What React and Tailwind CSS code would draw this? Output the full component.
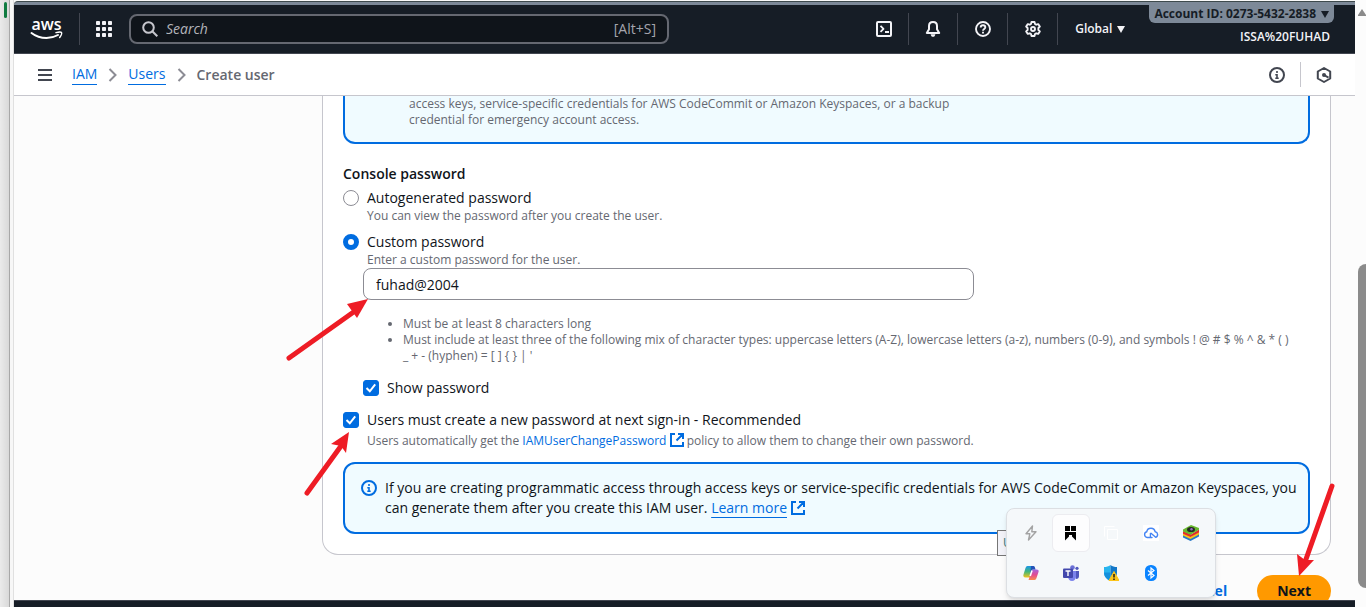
import React from "react";

function AwsLogo() {
  return (
    <svg className="block" width="34" height="34" viewBox="0 0 34 34" aria-label="AWS" role="img">
      <text x="16.500" y="18" textAnchor="middle" fontFamily="'Open Sans', sans-serif" fontWeight="600" fontSize="16" fill="#fff">aws</text>
      <path d="M1.500 21C6 24.500 11 26 16.500 26C20.500 26 24.500 25 28 23" fill="none" stroke="#fff" strokeWidth="2" strokeLinecap="round" />
      <path d="M26 20.600C28.500 19.900 31 19.900 31.500 20.500C32 21.400 31 24 29.700 25.400" fill="none" stroke="#fff" strokeWidth="1.500" strokeLinecap="round" strokeLinejoin="round" />
    </svg>
  );
}

function GridIcon() {
  const cells = [0, 6, 12];
  return (
    <svg width="16" height="16" viewBox="0 0 16 16" fill="#f3f3f7" aria-hidden="true">
      {cells.map((y) => cells.map((x) => <rect key={`${x}-${y}`} x={x} y={y} width="4" height="4" rx="0.800" />))}
    </svg>
  );
}

function SearchIcon() {
  return (
    <svg width="16" height="16" viewBox="0 0 16 16" fill="none" stroke="#c6c6cd" strokeWidth="2" aria-hidden="true">
      <circle cx="6.500" cy="6.500" r="5.300" />
      <path d="M10.300 10.300 15.300 15.300" />
    </svg>
  );
}

function ShellIcon() {
  return (
    <svg width="16" height="16" viewBox="0 0 16 16" fill="none" stroke="#f3f3f7" strokeWidth="2" strokeLinejoin="round" aria-hidden="true">
      <rect x="1" y="1" width="14" height="14" rx="1" />
      <path d="M4.500 4.800 7.500 7.800 4.500 10.800M9 11h4" strokeWidth="1.800" />
    </svg>
  );
}

function BellIcon() {
  return (
    <svg width="16" height="16" viewBox="0 0 16 16" fill="none" stroke="#f3f3f7" strokeWidth="2" strokeLinejoin="round" aria-hidden="true">
      <path d="M8 1C5.500 1 4 2.800 4 5v3.200L1.800 12h12.400L12 8.200V5c0-2.200-1.500-4-4-4Z" />
      <path d="M5.600 13.200c.3 1.700 1.200 2.600 2.400 2.600s2.100-.9 2.400-2.600Z" fill="#f3f3f7" stroke="none" />
    </svg>
  );
}

function HelpIcon() {
  return (
    <svg width="16" height="16" viewBox="0 0 16 16" fill="none" stroke="#f3f3f7" strokeWidth="1.900" aria-hidden="true">
      <circle cx="8" cy="8" r="7" />
      <path d="M5.700 6.400C5.700 5 6.700 4.300 8 4.300s2.300.8 2.300 2c0 1.700-2.300 1.700-2.300 3.500" />
      <path d="M8 10.700v1.800" />
    </svg>
  );
}

function GearIcon() {
  return (
    <svg width="16" height="16" viewBox="0 0 16 16" fill="none" stroke="#f3f3f7" strokeWidth="1.900" strokeLinejoin="round" aria-hidden="true">
      <path d="M6.500 1h3l.5 2 1.200.7 2-.6 1.600 2.500L13.400 7v2l1.400 1.400-1.600 2.500-2-.6-1.200.7-.5 2h-3l-.5-2-1.200-.7-2 .6-1.600-2.500L2.600 9V7L1.200 5.600l1.600-2.500 2 .6L6 3Z" />
      <circle cx="8" cy="8" r="2" />
    </svg>
  );
}

function MenuIcon() {
  return (
    <svg width="14" height="12" viewBox="0 0 14 12" fill="#424650" aria-hidden="true">
      <path d="M0 0h14v2H0zM0 5h14v2H0zM0 10h14v2H0z" />
    </svg>
  );
}

function ChevronIcon() {
  return (
    <svg width="9" height="14" viewBox="0 0 9 14" fill="none" stroke="#8c8c94" strokeWidth="2" aria-hidden="true">
      <path d="M1.500 1 7.500 7l-6 6" />
    </svg>
  );
}

function InfoIcon({ className }) {
  return (
    <svg className={className} width="16" height="16" viewBox="0 0 16 16" fill="none" stroke="currentColor" strokeWidth="2" aria-hidden="true">
      <circle cx="8" cy="8" r="7" />
      <path d="M8 4v2M6.300 7.700H8v4M6.300 11.300h3.400" strokeWidth="1.600" />
    </svg>
  );
}

function HexIcon() {
  return (
    <svg width="16" height="16" viewBox="0 0 16 16" fill="none" stroke="#424650" strokeWidth="2" strokeLinejoin="round" aria-hidden="true">
      <path d="M8 1 14.200 4.500v7L8 15 1.800 11.500v-7Z" />
      <circle cx="8" cy="8" r="2" fill="#424650" stroke="none" />
      <path d="M8 8 12.500 10.700" />
    </svg>
  );
}

function ExternalIcon() {
  return (
    <svg className="inline-block align-[-2px]" width="14" height="14" viewBox="0 0 14 14" fill="none" stroke="#006ce0" strokeWidth="2" aria-hidden="true">
      <path d="M5 1H1v12h12V9M8 1h5v5M13 1 6.500 7.500" />
    </svg>
  );
}

function Divider() {
  return <span className="h-8 w-px bg-[#424650]" />;
}

function Caret({ className }) {
  return (
    <svg className={className} width="8" height="7" viewBox="0 0 8 7" fill="currentColor" aria-hidden="true">
      <path d="M0 0h8L4 7Z" />
    </svg>
  );
}

function TopBar() {
  return (
    <header className="flex h-[49px] shrink-0 items-center border-b border-[#424650] bg-[#161d26] pl-4 text-[#f3f3f7]">
      <a href="#home" className="mr-[15px]"><AwsLogo /></a>
      <Divider />
      <button className="mx-4" aria-label="Services"><GridIcon /></button>
      <div className="ml-px flex h-[30px] w-[540px] items-center gap-2 rounded-lg border-2 border-[#656871] bg-[#0f141a] px-[11px]">
        <SearchIcon />
        <input aria-label="Search" placeholder="Search" className="min-w-0 flex-1 bg-transparent text-sm italic outline-none placeholder:text-[#b4b4bb]" />
        <span className="text-sm text-[#a4a4ad]">[Alt+S]</span>
      </div>
      <div className="ml-auto flex items-center">
        <button className="pr-4 pl-[17px]" aria-label="CloudShell"><ShellIcon /></button>
        <Divider />
        <button className="px-4" aria-label="Notifications"><BellIcon /></button>
        <Divider />
        <button className="pr-4 pl-[17px]" aria-label="Help"><HelpIcon /></button>
        <Divider />
        <button className="pr-4 pl-[17px]" aria-label="Settings"><GearIcon /></button>
        <Divider />
        <button className="flex items-center gap-[5px] pr-6 pl-[17px] text-xs font-semibold">Global <Caret /></button>
      </div>
      <div className="flex h-full flex-col items-end gap-1 pr-[21px]">
        <button className="flex h-[18px] items-center gap-[5px] rounded-b-md bg-[#7d8998] px-[5px] text-xs font-bold whitespace-nowrap text-[#161d26]">
          Account ID: 0273-5432-2838 <Caret />
        </button>
        <span className="pr-1 text-xs leading-5 font-semibold">ISSA%20FUHAD</span>
      </div>
    </header>
  );
}

function Breadcrumbs() {
  return (
    <div className="flex h-[42px] shrink-0 items-center border-b border-[#c6c6cd] bg-white pr-[23px] pl-6 text-sm leading-5">
      <button className="mr-5" aria-label="Open navigation"><MenuIcon /></button>
      <nav aria-label="Breadcrumbs" className="flex items-center gap-[11px]">
        <a href="#iam" className="border-b border-[#006ce0] text-[#006ce0]">IAM</a>
        <ChevronIcon />
        <a href="#users" className="border-b border-[#006ce0] text-[#006ce0]">Users</a>
        <ChevronIcon />
        <span className="font-semibold text-[#656871]">Create user</span>
      </nav>
      <div className="ml-auto flex items-center text-[#424650]">
        <button className="pr-[15px]" aria-label="Info"><InfoIcon /></button>
        <span className="h-[25px] w-px bg-[#c6c6cd]" />
        <button className="pl-[15px]" aria-label="Tools"><HexIcon /></button>
      </div>
    </div>
  );
}

function Radio({ id, label, hint, checked }) {
  return (
    <div className="flex gap-2">
      <input
        id={id}
        type="radio"
        name="console-password"
        defaultChecked={checked}
        className="mt-[2px] size-4 shrink-0 appearance-none rounded-full border border-[#8c8c94] bg-white checked:border-[5px] checked:border-[#006ce0]"
      />
      <div>
        <label htmlFor={id} className="block text-sm leading-5">{label}</label>
        <p className="text-xs leading-4 text-[#656871]">{hint}</p>
      </div>
    </div>
  );
}

function Checkbox({ id, label }) {
  return (
    <div className="flex items-center gap-2">
      <span className="grid shrink-0">
        <input id={id} type="checkbox" defaultChecked className="col-start-1 row-start-1 size-4 appearance-none rounded-[3px] border border-[#8c8c94] checked:border-[#006ce0] checked:bg-[#006ce0]" />
        <svg className="pointer-events-none col-start-1 row-start-1" width="16" height="16" viewBox="0 0 16 16" fill="none" stroke="#fff" strokeWidth="2" aria-hidden="true">
          <path d="M3.500 8 6.800 11.300 12.200 4.300" />
        </svg>
      </span>
      <label htmlFor={id} className="text-sm leading-5">{label}</label>
    </div>
  );
}

function PasswordCard() {
  return (
    <section className="rounded-b-2xl border border-t-0 border-[#c6c6cd] bg-white px-5 pb-5">
      <div className="rounded-b-xl border-2 border-t-0 border-[#006ce0] bg-[#f0fbff] pb-[14px] pl-16 text-xs leading-4 text-[#656871]">
        <p>
          access keys, service-specific credentials for AWS CodeCommit or Amazon Keyspaces, or a backup
          <br />
          credential for emergency account access.
        </p>
      </div>

      <h2 className="mt-5 text-sm leading-5 font-semibold">Console password</h2>
      <div className="mt-1 flex flex-col gap-2">
        <Radio id="auto" label="Autogenerated password" hint="You can view the password after you create the user." />
        <Radio id="custom" label="Custom password" hint="Enter a custom password for the user." checked />
      </div>

      <div className="pl-5">
        <input
          type="text"
          aria-label="Custom password"
          defaultValue="fuhad@2004"
          className="h-8 w-[611px] max-w-full rounded-lg border border-[#8c8c94] bg-white px-3 text-sm outline-none"
        />
        <ul className="mt-4 mb-[14px] list-disc pl-10 text-xs leading-4 text-[#656871]">
          <li>Must be at least 8 characters long</li>
          <li>
            Must include at least three of the following mix of character types: uppercase letters (A-Z), lowercase letters (a-z), numbers (0-9), and symbols ! @ # $ % ^ &amp; * ( )
            <br />_ + - (hyphen) = [ ] {"{ }"} | '
          </li>
        </ul>
        <Checkbox id="show" label="Show password" />
      </div>

      <div className="mt-3">
        <Checkbox id="reset" label="Users must create a new password at next sign-in - Recommended" />
        <p className="pl-6 text-xs leading-[22px] text-[#656871]">
          Users automatically get the <a href="#policy" className="text-[#006ce0]">IAMUserChangePassword <ExternalIcon /></a> policy to allow them to change their own password.
        </p>
      </div>

      <div className="mt-[10px] flex gap-2 rounded-xl border-2 border-[#006ce0] bg-[#f0fbff] py-[14px] pr-1 pl-4 text-sm leading-5">
        <InfoIcon className="mt-[2px] shrink-0 text-[#006ce0]" />
        <p>
          If you are creating programmatic access through access keys or service-specific credentials for AWS CodeCommit or Amazon Keyspaces, you
          <br />
          can generate them after you create this IAM user.{" "}
          <a href="#learn" className="text-[#006ce0]"><span className="underline underline-offset-4">Learn more</span> <ExternalIcon /></a>
        </p>
      </div>
    </section>
  );
}

function TrayIcon({ children }) {
  return (
    <svg width="16" height="16" viewBox="0 0 16 16" aria-hidden="true">{children}</svg>
  );
}

const trayItems = [
  { name: "Power", icon: <path d="M9.500 1 3 8.800h3.800L5.500 15 13 6.800H8.800Z" fill="none" stroke="#a3a3a3" strokeWidth="1.400" strokeLinejoin="round" /> },
  { name: "Bookmarks", active: true, icon: <path d="M2 1h5v5H2zM8 1h5v5H8zM2 7h11v8.500L9 11.500V10H6v1.500L2 15.500Z" fill="#000" /> },
  { name: "Windows", icon: <path d="M1.500 11.500V1.500H11.500M4.500 4.500h10v10h-10z" fill="none" stroke="#fff" strokeWidth="1" /> },
  {
    name: "Cloud",
    icon: (
      <>
        <path d="M0 0h16v16H0z" fill="#fff" />
        <path d="M9 12.500H4.200a2.900 2.900 0 0 1-.4-5.700C4 4.500 5.800 3.200 8 3.200s3.700 1.300 4.100 3.500a2.900 2.900 0 0 1 .6 5.600L8 8.200" fill="none" stroke="#4485f4" strokeWidth="1.400" strokeLinejoin="round" strokeLinecap="round" />
        <path d="M7.400 8v4.500" stroke="#4485f4" strokeWidth="1.300" />
      </>
    ),
  },
  {
    name: "BlueStacks",
    icon: (
      <>
        <path d="M0 9.500 8 12.500 16 8v3.500L7.500 16 0 12.500Z" fill="#2878c8" />
        <path d="M0 8 8 11.500l8-4.500v2.500L7.500 14 0 10.500Z" fill="#f5c518" />
        <path d="M0 6 8 9.500l8-5v3L7.500 12 0 8.800Z" fill="#e32b2b" />
        <path d="M0 4.500 8 0l8 3v1.800L7.500 9.800 0 6.500Z" fill="#68b82e" />
        <ellipse cx="8" cy="4.500" rx="4" ry="2.600" fill="#252a25" />
        <circle cx="8.500" cy="4.200" r="1.200" fill="#9a6ac5" />
      </>
    ),
  },
  {
    name: "Copilot",
    icon: (
      <>
        <defs>
          <linearGradient id="cpLeft" x1="0" y1="0" x2="0" y2="1"><stop stopColor="#1795e8" /><stop offset="0.500" stopColor="#44b779" /><stop offset="1" stopColor="#f2c31a" /></linearGradient>
          <linearGradient id="cpRight" x1="0" y1="0" x2="0" y2="1"><stop stopColor="#a563df" /><stop offset="0.500" stopColor="#e24b91" /><stop offset="1" stopColor="#fb8a4b" /></linearGradient>
        </defs>
        <path d="M4.500 1h6L7 12.500H2.500C.5 12.500 0 11 .5 9.500L2.500 3C3 1.700 3.500 1 4.500 1Z" fill="url(#cpLeft)" />
        <path d="M11.500 15h-6L9 4.500h4.500c2 0 2.500 1.200 2 2.500l-2 6c-.4 1.200-1 2-2 2Z" fill="url(#cpRight)" />
        <path d="M8 1h2.500c1 0 1.500 1 2 3.500H9L7 10.500Z" fill="#2352b8" />
        <path d="m9 5.500-1.800 5.500" stroke="#fff" strokeWidth="1.600" />
      </>
    ),
  },
  {
    name: "Teams",
    icon: (
      <>
        <circle cx="9.500" cy="2.600" r="2.300" fill="#6b70d6" />
        <circle cx="14" cy="3.300" r="1.600" fill="#5058bd" />
        <path d="M11 6h5v5c0 2-1 3-3 3Z" fill="#5058bd" />
        <path d="M5 6h8v5.500c0 2.600-1.700 4.500-4 4.500s-4-1.900-4-4.500Z" fill="#7b83eb" />
        <rect x="0" y="3.500" width="10" height="9.500" rx="1" fill="#4348ad" />
        <path d="M2.500 6h5M5 6v5" stroke="#fff" strokeWidth="1.400" />
      </>
    ),
  },
  {
    name: "Security",
    icon: (
      <>
        <path d="M7.500 0C5.500 1.600 3.500 2 1 2v5.500C1 11.500 3.500 14 7.500 16Z" fill="#27b4ee" />
        <path d="M7.500 0c2 1.600 4 2 6.500 2v5.500c0 4-2.500 6.500-6.500 8.500Z" fill="#1277c8" />
        <path d="M1 7.500h6.500V16C3.500 14 1 11.500 1 7.500Z" fill="#1490dc" />
        <path d="M11 6.500 16 15.500H6Z" fill="#fcc419" stroke="#fcc419" strokeLinejoin="round" />
        <path d="M11 9v3.500M11 13.500V15" stroke="#111" strokeWidth="1.400" />
      </>
    ),
  },
  {
    name: "Bluetooth",
    icon: (
      <>
        <rect x="2" y="0" width="12" height="16" rx="5.500" fill="#0a84ff" />
        <path d="m5 5.500 6 5L8 13V3l3 2.500-6 5" fill="none" stroke="#fff" strokeWidth="1.200" />
      </>
    ),
  },
];

function Tray() {
  return (
    <div className="absolute right-[150px] bottom-[9px] grid grid-cols-5 rounded-lg border border-[#dcdfe3] bg-[#f5f8fa] p-1 shadow-md">
      {trayItems.map((item) => (
        <div key={item.name} className="grid size-10 place-items-center">
          <button
            aria-label={item.name}
            className={item.active ? "grid size-[38px] place-items-center rounded-md border border-[#ececf0] bg-[#fdfdfe]" : "grid size-[38px] place-items-center rounded-md"}
          >
            <TrayIcon>{item.icon}</TrayIcon>
          </button>
        </div>
      ))}
    </div>
  );
}

function Arrows() {
  return (
    <svg className="pointer-events-none absolute top-0 left-0" width="1366" height="607" viewBox="0 0 1366 607" fill="#ee1c25" stroke="#ee1c25" aria-hidden="true">
      <g strokeWidth="5" strokeLinecap="round">
        <path d="M289 358 355 311" />
        <path d="M307 493 341 446" />
        <path d="M1332 486 1305 562" />
      </g>
      <g stroke="none">
        <path d="M368 299 347 304 352 311 357 318Z" />
        <path d="M349 432 331 444 341 446 346 453Z" />
        <path d="M1299 576 1297 554 1305 560 1314 560Z" />
      </g>
    </svg>
  );
}

export default function App() {
  return (
    <div className="relative flex h-screen overflow-hidden bg-[#fafafa] font-['Open_Sans',sans-serif] text-[#0f141a]">
      <aside className="flex w-[10px] shrink-0 justify-end border-r border-[#a8a8a8] bg-linear-to-r from-[#ebebeb] to-[#d9d9d9] pt-[2px] pr-[2px]">
        <span className="h-4 w-[3px] rounded-full bg-[#107c41]" />
      </aside>
      <div className="w-1 shrink-0 border-r border-[#e0e0e0] bg-[#f7f7f7]" />

      <div className="flex min-w-0 flex-1 flex-col pt-px">
        <div className="h-1 shrink-0 rounded-tl-lg border-t border-[#3e4a4d] bg-[#7d8998]" />
        <TopBar />
        <Breadcrumbs />
        <main className="min-h-0 flex-1 overflow-hidden bg-[#fcfcfc] pr-6 pl-[308px]">
          <PasswordCard />
          <div className="mt-5 flex items-center justify-end gap-[30px] text-sm font-bold">
            <button className="text-[#006ce0]">Cancel</button>
            <button className="h-8 rounded-full bg-[#ff9900] px-5">Next</button>
          </div>
        </main>
        <footer className="h-[7px] shrink-0 border-t border-[#424650] bg-[#161d26]" />
      </div>

      <div className="flex w-[11px] shrink-0 flex-col items-end bg-[#fcfcfc] pt-[9px]">
        <svg width="8" height="7" viewBox="0 0 8 7" fill="#8b8b8b" aria-hidden="true"><path d="M4 0 8 6v1H0V6Z" /></svg>
        <div className="mt-[248px] h-[324px] w-2 rounded-l-full rounded-r-sm bg-[#8b8b8b]" />
      </div>

      <div className="absolute right-[340px] bottom-[51px] h-[26px] w-[29px] border border-[#767676] bg-[#f2f2f8] pl-[5px] text-xs leading-6 text-[#3a7a7a]">U</div>
      <Tray />
      <Arrows />
    </div>
  );
}
